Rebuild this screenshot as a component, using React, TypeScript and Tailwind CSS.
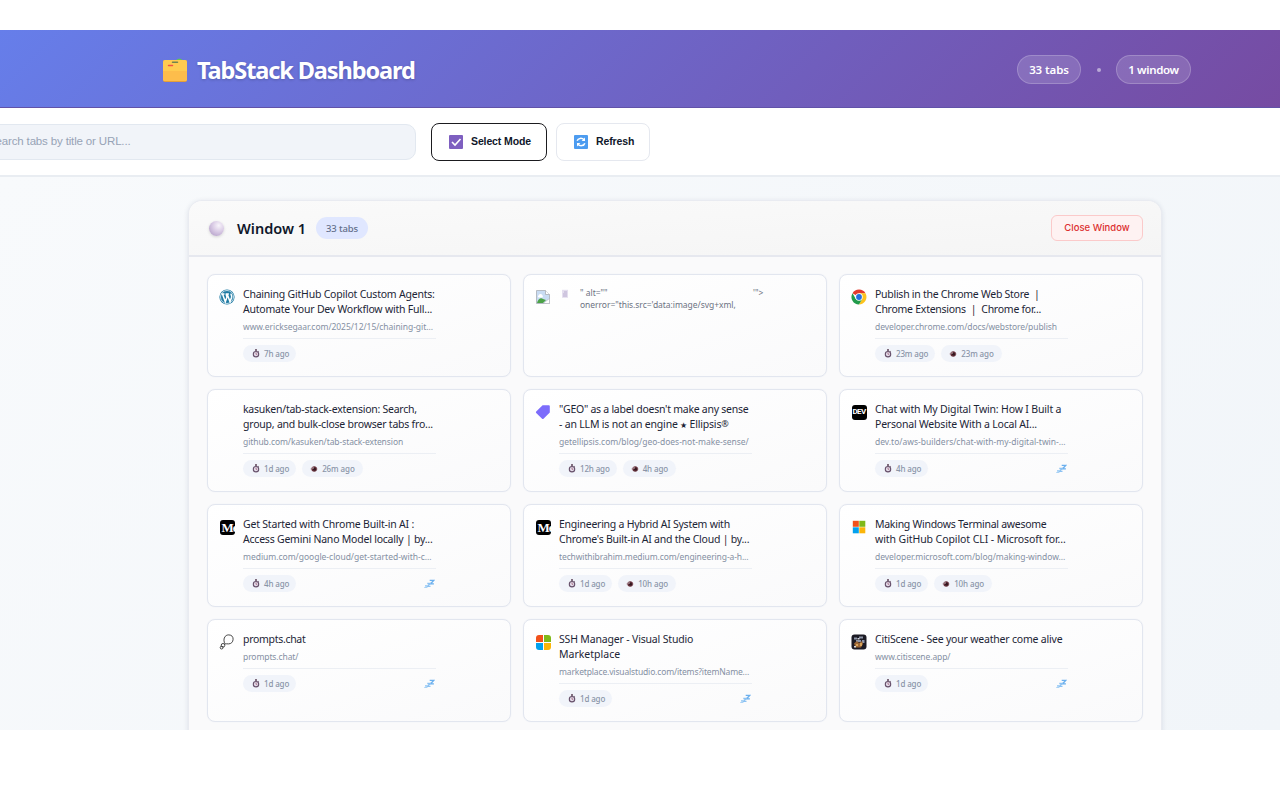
import type { ReactNode } from "react";

type Tab = {
  title: ReactNode[];
  spacing: string[];
  url: string;
  urlSpacing: string;
  icon: ReactNode;
  opened: string;
  viewed?: string;
  asleep?: boolean;
};

const WordPressIcon = () => (
  <svg viewBox="0 0 16 16" className="size-4">
    <circle cx="8" cy="8" r="7.6" fill="#1f7ba3" />
    <circle cx="8" cy="8" r="6.5" fill="none" stroke="#e8f3f7" strokeWidth="0.8" />
    <path d="M2.3 5h3.2M6.6 5h3.3M3.6 5.2l2.7 7.6L8 7.9 7.1 5.2M8.3 5.2l2.7 7.6 1.6-4.6c.4-1.6-.9-2.2-.5-3.6" fill="none" stroke="#fff" strokeWidth="1.5" />
  </svg>
);

const ChromeIcon = () => (
  <svg viewBox="0 0 16 16" className="size-4">
    <path d="M8 8 1.5 4.25A7.5 7.5 0 0 1 14.5 4.25L8 4.5Z" fill="#e33b2e" />
    <path d="M8 4.3h6.5A7.5 7.5 0 0 1 8 15.5L11.2 9.9Z" fill="#fcc31e" />
    <path d="M1.5 4.25 4.8 9.9 11.2 9.9 8 15.5A7.5 7.5 0 0 1 1.5 4.25Z" fill="#219b4b" />
    <circle cx="8" cy="8" r="3.7" fill="#fff" />
    <circle cx="8" cy="8" r="2.9" fill="#246fe0" />
  </svg>
);

const LabelIcon = () => (
  <svg viewBox="0 0 16 16" className="size-4">
    <path d="M7.6 1.2h6.2a1 1 0 0 1 1 1v6.4L8.5 14.7a1 1 0 0 1-1.4 0L1.2 9a1 1 0 0 1 0-1.4Z" fill="#7c6cfb" />
  </svg>
);

const DevIcon = () => (
  <span className="flex size-[15px] items-center justify-center rounded-[3px] bg-black">
    <span className="font-['Roboto',sans-serif] text-[8px] leading-none font-bold tracking-[-0.6px] text-white">DEV</span>
  </span>
);

const MediumIcon = () => (
  <span className="flex size-[15px] items-center overflow-hidden rounded-[3px] bg-black pl-0.5">
    <span className="font-['Liberation_Serif',serif] text-[13px] leading-none font-bold tracking-[-1px] text-white">Me</span>
  </span>
);

const MicrosoftIcon = () => (
  <svg viewBox="0 0 16 16" className="size-4">
    <path d="M1.8 1.8h6v6h-6z" fill="#f1511b" />
    <path d="M8.3 1.8h6v6h-6z" fill="#80b918" />
    <path d="M1.8 8.3h6v6h-6z" fill="#03a1ee" />
    <path d="M8.3 8.3h6v6h-6z" fill="#fbb50a" />
  </svg>
);

const MarketplaceIcon = () => (
  <span className="grid size-[15px] grid-cols-2 gap-px overflow-hidden rounded-[3px]">
    <span className="bg-[#f1511b]" />
    <span className="bg-[#80b918]" />
    <span className="bg-[#03a1ee]" />
    <span className="bg-[#fbb50a]" />
  </span>
);

const PromptsIcon = () => (
  <svg viewBox="0 0 16 16" className="size-4" fill="none" stroke="#333" strokeWidth="0.9">
    <path d="M6.2 10C4.6 8 4.4 4.3 6.3 2.3c1-1 2-1.4 3.5-1.4 3 0 4.4 2 4.3 4.4-.1 2.8-2 4.6-4.6 4.6-1.2 0-2.3-.3-3.3.1" />
    <circle cx="4" cy="11.3" r="1.8" />
    <circle cx="2.6" cy="13.6" r="1.4" />
  </svg>
);

const CitiSceneIcon = () => (
  <svg viewBox="0 0 16 16" className="size-4">
    <rect x="0.5" y="0.5" width="15" height="15" rx="3" fill="#1c1b25" />
    <path d="M3 3.5h3v2H3zM8 2.5h4v2H8zM5 6h5v2H5zM11 6h2.5v3H11z" fill="#8d95a8" />
    <path d="M3 9.5 6 7l2 2 3-2 1 3-2 3.5H4.5Z" fill="#9c6636" />
    <path d="M5 10h2v2H5zM9 9h2v3H9z" fill="#d8a459" />
    <path d="M6.5 4h2v1.5h-2zM3 12h2v1.5H3z" fill="#d8dae0" />
  </svg>
);

const Stopwatch = () => (
  <svg viewBox="0 0 8 9" className="h-[9px] w-2">
    <path d="M3 .3h2v1.4H3zM6 1.7l.9.8-.6.6-.8-.7z" fill="#5b4055" />
    <circle cx="4" cy="5.2" r="2.7" fill="#e4dcea" stroke="#66506a" strokeWidth="1.1" />
    <path d="M4 3.6v1.7h1.2" fill="none" stroke="#9b5870" strokeWidth="0.7" />
  </svg>
);

const Eye = () => (
  <svg viewBox="0 0 8 8" className="size-2">
    <path d="M.2 4C1.7 1.6 6.3 1.3 7.8 4 6.3 6.8 1.7 6.5.2 4Z" fill="#cdbcc5" />
    <circle cx="4.2" cy="4" r="2.7" fill="#65313c" />
    <circle cx="4.5" cy="4.2" r="1.4" fill="#32171f" />
    <circle cx="3" cy="3" r="0.7" fill="#e9dbe0" />
  </svg>
);

const Sleep = () => (
  <svg viewBox="0 0 11 10" className="h-2.5 w-[11px]" fill="none">
    <path d="M5.7 1.4h4L6.4 4.9h3.5" stroke="#6bb0ee" strokeWidth="1.4" />
    <path d="M3.3 4.5h2.9L3.5 7.3h3" stroke="#8cc2f3" strokeWidth="1.3" />
    <path d="M1 6.5h2L1 8.5h2.4" stroke="#a9d2f5" strokeWidth="1.1" />
  </svg>
);

const TABS: (Tab | null)[] = [
  {
    title: ["Chaining GitHub Copilot Custom Agents:", "Automate Your Dev Workflow with Full..."],
    spacing: ["tracking-[-0.22px]", "tracking-[-0.21px]"],
    url: "www.ericksegaar.com/2025/12/15/chaining-git...",
    urlSpacing: "tracking-[-0.05px]",
    icon: <WordPressIcon />,
    opened: "7h ago",
  },
  null,
  {
    title: ["Publish in the Chrome Web Store \u00a0|", "Chrome Extensions \u00a0| \u00a0Chrome for..."],
    spacing: ["tracking-[-0.27px]", "tracking-[-0.26px]"],
    url: "developer.chrome.com/docs/webstore/publish",
    urlSpacing: "tracking-[-0.08px]",
    icon: <ChromeIcon />,
    opened: "23m ago",
    viewed: "23m ago",
  },
  {
    title: ["kasuken/tab-stack-extension: Search,", "group, and bulk-close browser tabs fro..."],
    spacing: ["tracking-[-0.25px]", "tracking-[-0.22px]"],
    url: "github.com/kasuken/tab-stack-extension",
    urlSpacing: "tracking-[-0.08px]",
    icon: null,
    opened: "1d ago",
    viewed: "26m ago",
  },
  {
    title: [
      "\"GEO\" as a label doesn't make any sense",
      <>
        - an LLM is not an engine <span className="text-[8px] leading-none">★</span> Ellipsis
        <span className="align-[1px] text-[9px] leading-none">®</span>
      </>,
    ],
    spacing: ["tracking-[-0.26px]", "tracking-[-0.19px]"],
    url: "getellipsis.com/blog/geo-does-not-make-sense/",
    urlSpacing: "tracking-[-0.02px]",
    icon: <LabelIcon />,
    opened: "12h ago",
    viewed: "4h ago",
  },
  {
    title: ["Chat with My Digital Twin: How I Built a", "Personal Website With a Local AI..."],
    spacing: ["tracking-[-0.16px]", "tracking-[-0.2px]"],
    url: "dev.to/aws-builders/chat-with-my-digital-twin-...",
    urlSpacing: "",
    icon: <DevIcon />,
    opened: "4h ago",
    asleep: true,
  },
  {
    title: ["Get Started with Chrome Built-in AI :", "Access Gemini Nano Model locally | by..."],
    spacing: ["tracking-[-0.2px]", "tracking-[-0.22px]"],
    url: "medium.com/google-cloud/get-started-with-c...",
    urlSpacing: "tracking-[-0.02px]",
    icon: <MediumIcon />,
    opened: "4h ago",
    asleep: true,
  },
  {
    title: ["Engineering a Hybrid AI System with", "Chrome's Built-in AI and the Cloud | by..."],
    spacing: ["tracking-[-0.25px]", "tracking-[-0.23px]"],
    url: "techwithibrahim.medium.com/engineering-a-h...",
    urlSpacing: "tracking-[-0.11px]",
    icon: <MediumIcon />,
    opened: "1d ago",
    viewed: "10h ago",
  },
  {
    title: ["Making Windows Terminal awesome", "with GitHub Copilot CLI - Microsoft for..."],
    spacing: ["tracking-[-0.27px]", "tracking-[-0.08px]"],
    url: "developer.microsoft.com/blog/making-window...",
    urlSpacing: "tracking-[-0.05px]",
    icon: <MicrosoftIcon />,
    opened: "1d ago",
    viewed: "10h ago",
  },
  {
    title: ["prompts.chat"],
    spacing: ["tracking-[-0.3px]"],
    url: "prompts.chat/",
    urlSpacing: "tracking-[-0.1px]",
    icon: <PromptsIcon />,
    opened: "1d ago",
    asleep: true,
  },
  {
    title: ["SSH Manager - Visual Studio", "Marketplace"],
    spacing: ["tracking-[-0.17px]", ""],
    url: "marketplace.visualstudio.com/items?itemName...",
    urlSpacing: "tracking-[-0.15px]",
    icon: <MarketplaceIcon />,
    opened: "1d ago",
    asleep: true,
  },
  {
    title: ["CitiScene - See your weather come alive"],
    spacing: ["tracking-[-0.2px]"],
    url: "www.citiscene.app/",
    urlSpacing: "tracking-[-0.1px]",
    icon: <CitiSceneIcon />,
    opened: "1d ago",
    asleep: true,
  },
];

const CARD = "h-[103px] rounded-lg border border-[#e2e6ef] bg-gradient-to-br from-white to-[#fafafb] shadow-[0_0_1px_#e2e6ef]";

function Opened({ label }: { label: string }) {
  return (
    <span className="flex h-[17px] items-center gap-1 rounded-full bg-[#f1f4fa] pr-[7px] pl-[9px]">
      <Stopwatch />
      <span className="text-[8px] font-medium tracking-[-0.15px] whitespace-nowrap text-[#8a94a8]">{label}</span>
    </span>
  );
}

function Viewed({ label }: { label: string }) {
  return (
    <span className="flex h-[17px] items-center gap-1 rounded-full bg-[#f1f4fa] px-2">
      <Eye />
      <span className="text-[8px] font-medium tracking-[-0.1px] whitespace-nowrap text-[#8a94a8]">{label}</span>
    </span>
  );
}

function TabCard({ tab }: { tab: Tab }) {
  return (
    <article className={`${CARD} flex gap-2 pt-3 pl-[11px]`}>
      <span className="mt-0.5 flex size-4 shrink-0 items-center justify-center">{tab.icon}</span>
      <div className="w-[193px]">
        <h3 className="text-[10.5px] leading-[15px] text-[#1c2536]">
          {tab.title.map((line, i) => (
            <span key={i} className="block h-[15px] whitespace-nowrap">
              <span className={tab.spacing[i]}>{line}</span>
            </span>
          ))}
        </h3>
        <p className="mt-[3px] h-[14px] text-[8.5px] leading-[14px] whitespace-nowrap text-[#8590a3]">
          <span className={tab.urlSpacing}>{tab.url}</span>
        </p>
        <div className="mt-1 flex items-center gap-1.5 border-t border-[#eceff4] pt-1.5">
          <Opened label={tab.opened} />
          {tab.viewed && <Viewed label={tab.viewed} />}
          {tab.asleep && (
            <span className="mr-px ml-auto">
              <Sleep />
            </span>
          )}
        </div>
      </div>
    </article>
  );
}

// Tab whose favicon markup leaked into the card as text
function BrokenCard() {
  return (
    <article className={`${CARD} flex pt-3 pl-[11px] text-[8.5px] leading-3 text-[#6c7282]`}>
      <svg viewBox="0 0 16 16" className="mt-0.5 size-4">
        <path d="M1.5 1.5h9l4 4v9h-13z" fill="#c9dcf3" stroke="#a8adb5" strokeWidth="0.8" />
        <path d="M10.5 1.5v4h4" fill="#fff" stroke="#a8adb5" strokeWidth="0.8" />
        <path d="M2 14c1-4 4-6 6-4l3 1-3 3H2Z" fill="#4ca247" />
        <path d="M3.5 6.5a2 2 0 0 1 3.8-.3 1.3 1.3 0 0 1 0 2.2H4a1 1 0 0 1-.5-1.9Z" fill="#fff" />
        <path d="m8 14.5 6.5-5v5z" fill="#fff" stroke="#a8adb5" strokeWidth="0.5" />
      </svg>
      <svg viewBox="0 0 8 10" className="mt-0.5 ml-[10px] h-2.5 w-2">
        <path d="M1 .8h6v8H1z" fill="#e4deee" />
        <path d="M2 5h4M2 7h4M3 3h3" stroke="#b6a8cc" strokeWidth="0.9" />
      </svg>
      <div className="ml-[11px] w-[173px] whitespace-nowrap">
        <div>" alt=""</div>
        <div className="tracking-[-0.04px]">onerror="this.src='data:image/svg+xml,</div>
      </div>
      <div>'"&gt;</div>
    </article>
  );
}

function Header() {
  return (
    <header className="flex h-[78px] items-center justify-between border-b border-[#6152a8] bg-[linear-gradient(135deg,#667eea_0%,#764ba2_100%)] pt-px pr-[89px] pl-[162px] text-white">
      <div className="flex items-center gap-[9px] pt-[3px]">
        <svg viewBox="0 0 26 26" className="mb-0.5 size-[26px]">
          <rect x="1" y="3" width="24" height="22" rx="2" fill="#e59f38" />
          <rect x="1" y="3" width="24" height="21" rx="2" fill="#ffcb50" />
          <path d="M1 14h24v8a2 2 0 0 1-2 2H3a2 2 0 0 1-2-2z" fill="#fdbd4b" />
          <path d="M10.5 5.3h5" stroke="#71834e" strokeWidth="1.5" strokeLinecap="round" />
          <path d="M6.5 8.5h4" stroke="#f05446" strokeWidth="1.5" strokeLinecap="round" />
          <path d="M14.500 3c1-1.600 5-1.600 5.600 0z" fill="#62c554" />
        </svg>
        <h1 className="text-[23.5px] font-bold tracking-[-1.1px] whitespace-nowrap [text-shadow:0_1px_3px_rgba(0,0,0,0.2)]">TabStack Dashboard</h1>
      </div>
      <div className="flex items-center text-[11.5px] font-semibold">
        <span className="flex h-[29px] w-16 items-center justify-center rounded-full border border-white/20 bg-white/15 pt-0.5 tracking-[-0.1px]">33 tabs</span>
        <span className="mx-[15.5px] mt-0.5 size-1 rounded-full bg-white/50" />
        <span className="flex h-[29px] w-[75px] items-center justify-center rounded-full border border-white/20 bg-white/15 pt-0.5 tracking-[-0.35px]">1 window</span>
      </div>
    </header>
  );
}

function Toolbar() {
  return (
    <div className="flex h-[69px] items-center border-b-2 border-[#e9edf2] bg-white font-['Liberation_Sans',sans-serif] text-[#0f172a]">
      <div className="-ml-4 flex h-9 w-[432px] items-center rounded-[10px] border-[1.5px] border-[#e2e8f0] bg-[#f1f4f9] text-[11.5px] text-[#97a3b6]">
        <span className="ml-[3px] tracking-[-0.15px] whitespace-nowrap">Search tabs by title or URL...</span>
      </div>
      <button className="ml-[15px] flex h-[38px] w-[116px] items-center rounded-lg border border-[#1b1b1f] pl-[17px] text-[10.5px] font-bold tracking-[-0.12px]">
        <svg viewBox="0 0 14 14" className="mr-2 size-3.5">
          <rect width="14" height="14" rx="1" fill="#7e5fc0" />
          <path d="m3 7 3 3 5.5-6" fill="none" stroke="#fff" strokeWidth="1.6" />
        </svg>
        Select Mode
      </button>
      <button className="ml-[9px] flex h-[38px] w-[94px] items-center rounded-lg border-[1.5px] border-[#e5e8ef] pl-[17px] text-[10.5px] font-bold tracking-[-0.1px]">
        <svg viewBox="0 0 14 14" className="mr-2 size-3.5">
          <rect width="14" height="14" rx="1" fill="#4d9cf0" />
          <path d="M3.2 5.8C4 3 8 2.5 10 4.8M10.8 8.2C10 11 6 11.5 4 9.2" fill="none" stroke="#fff" strokeWidth="1.5" />
          <path d="M11 2.6V6H7.6zM3 11.4V8h3.4z" fill="#fff" />
        </svg>
        Refresh
      </button>
    </div>
  );
}

export default function App() {
  return (
    <div className="h-[800px] w-[1280px] overflow-hidden bg-white py-[30px] font-['Noto_Sans','Open_Sans',sans-serif]">
      <div className="flex h-[700px] flex-col overflow-hidden">
        <Header />
        <Toolbar />
        <main className="min-h-0 flex-1 bg-[linear-gradient(135deg,#f8fafc_0%,#f1f5f9_100%)] pt-[23px] pl-[188px]">
          <section className="h-[700px] w-[974px] rounded-t-[14px] border border-[#e9ebf1] bg-[#fafafb] shadow-[0_1px_5px_rgba(30,50,90,0.12)]">
            <div className="flex h-[56px] items-center rounded-t-[13px] border-b-2 border-[#e6e8ef] bg-gradient-to-br from-[#fafafa] to-[#f5f5f5] pr-[18px] pl-[20px]">
              <span className="size-[15px] rounded-full bg-[radial-gradient(circle_at_65%_30%,#f8f4fb_0%,#d8c9e4_45%,#a994c0_100%)] shadow-[0_1px_3px_rgba(0,0,0,0.15)]" />
              <h2 className="ml-[13px] pt-0.5 text-[14.5px] font-semibold whitespace-nowrap text-[#0f172a]">Window 1</h2>
              <span className="ml-[10px] flex h-[22px] w-[52px] items-center justify-center rounded-full bg-[#e0e7ff] pt-0.5 text-[9.5px] font-medium tracking-[-0.1px] text-[#64708b]">
                33 tabs
              </span>
              <button className="ml-auto h-[26px] w-[92px] rounded-md border-[1.5px] border-[#fbcaca] bg-[#fef2f2] font-['Inter',sans-serif] text-[9.5px] font-medium text-[#dc2f2f]">
                Close Window
              </button>
            </div>
            <div className="grid grid-cols-[304px_304px_304px] gap-3 pt-[17px] pl-[18px]">
              {TABS.map((tab, i) => (tab ? <TabCard key={i} tab={tab} /> : <BrokenCard key={i} />))}
            </div>
          </section>
        </main>
      </div>
    </div>
  );
}
